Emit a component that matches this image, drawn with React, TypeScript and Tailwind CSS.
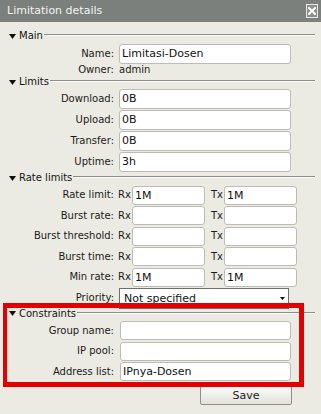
import React from "react";

const Tri = () => (
  <svg width="7" height="5" viewBox="0 0 7 5" className="shrink-0">
    <polygon points="0,0 7,0 3.5,5" fill="#111" />
  </svg>
);

const Header = ({ title }: { title: string }) => (
  <div className="flex items-center h-[12px] pl-[9px] pr-[6px]">
    <Tri />
    <span className="ml-[3px] text-[10px] leading-[12px] text-[#141414] whitespace-nowrap">{title}</span>
    <div className="flex-1 ml-[1px] -mt-[2px] h-[2px] border-t border-t-[#8c8c8a] border-b border-b-[#fbfbf8]" />
  </div>
);

const Label = ({ text }: { text: string }) => (
  <div className="w-[116px] shrink-0 text-right pr-[2px] text-[10px] leading-[12px] text-[#1a1a1a] whitespace-nowrap">
    {text}
  </div>
);

const Field = ({ value, cls }: { value: string; cls: string }) => (
  <div
    className={
      "bg-white border border-[#bcbcb4] rounded-[3px] text-[11px] leading-[13px] text-[#111] pl-[2px] flex items-center whitespace-nowrap overflow-hidden " +
      cls
    }
  >
    {value}
  </div>
);

const Row = ({ label, value, h }: { label: string; value: string; h: string }) => (
  <div className="flex items-center h-[21px]">
    <Label text={label} />
    <Field value={value} cls={"ml-[3px] w-[172px] " + h} />
  </div>
);

const RateRow = ({ label, rx, tx }: { label: string; rx: string; tx: string }) => (
  <div className="flex items-center h-[20.5px]">
    <Label text={label} />
    <span className="ml-[2px] w-[13px] text-[10px] leading-[12px] text-[#1a1a1a]">Rx</span>
    <Field value={rx} cls="ml-[1px] w-[73px] h-[19px]" />
    <span className="ml-[6px] w-[13px] text-[10px] leading-[12px] text-[#1a1a1a]">Tx</span>
    <Field value={tx} cls="w-[73px] h-[19px]" />
  </div>
);

const ConRow = ({ label, value }: { label: string; value: string }) => (
  <div className="flex items-center h-[20.5px]">
    <Label text={label} />
    <Field value={value} cls="ml-[4px] w-[171px] h-[19px]" />
  </div>
);

export default function App() {
  return (
    <div className="relative w-[321px] h-[414px] overflow-hidden bg-[#ebebe3] font-['DejaVu_Sans',sans-serif]">
      {/* Title bar */}
      <div className="flex items-center justify-between h-[22px] bg-[#7b807c] pl-[7px] pr-[3px]">
        <span className="text-[11px] leading-[14px] text-[#f4f4f2]">Limitation details</span>
        <div className="w-[12px] h-[14px] border border-[#e8e8e8] bg-[#8b908c] flex items-center justify-center">
          <svg width="8" height="8" viewBox="0 0 8 8">
            <path d="M1 1 L7 7 M7 1 L1 7" stroke="#ffffff" strokeWidth="2" strokeLinecap="square" />
          </svg>
        </div>
      </div>

      <div className="mt-[8px]">
        <Header title="Main" />
        <div className="mt-[1px]">
          <Row label="Name:" value="Limitasi-Dosen" h="h-[20px]" />
        </div>
        <div className="flex items-center h-[12px]">
          <Label text="Owner:" />
          <span className="ml-[3px] text-[10px] leading-[12px] text-[#1a1a1a]">admin</span>
        </div>

        <Header title="Limits" />
        <Row label="Download:" value="0B" h="h-[20px]" />
        <Row label="Upload:" value="0B" h="h-[20px]" />
        <Row label="Transfer:" value="0B" h="h-[20px]" />
        <Row label="Uptime:" value="3h" h="h-[20px]" />

        <Header title="Rate limits" />
        <div className="mt-[1px]">
          <RateRow label="Rate limit:" rx="1M" tx="1M" />
          <RateRow label="Burst rate:" rx="" tx="" />
          <RateRow label="Burst threshold:" rx="" tx="" />
          <RateRow label="Burst time:" rx="" tx="" />
          <RateRow label="Min rate:" rx="1M" tx="1M" />
        </div>
        <div className="flex items-center h-[21px]">
          <Label text="Priority:" />
          <div className="ml-[3px] w-[170px] h-[21px] bg-white border border-[#6e6e6e] flex items-center justify-between pl-[4px] pr-[3px]">
            <span className="text-[11px] leading-[13px] text-[#111]">Not specified</span>
            <svg width="5" height="3" viewBox="0 0 5 3">
              <polygon points="0,0 5,0 2.5,3" fill="#111" />
            </svg>
          </div>
        </div>

        <div className="-mt-[1px]">
          <Header title="Constraints" />
        </div>
        <div className="mt-[1px]">
          <ConRow label="Group name:" value="" />
          <ConRow label="IP pool:" value="" />
          <ConRow label="Address list:" value="IPnya-Dosen" />
        </div>

        <div className="pl-[200px] pt-[3.5px]">
          <div className="w-[92px] h-[19px] border border-[#8f8f8b] rounded-[2px] bg-gradient-to-b from-[#fbfbf9] to-[#e2e2dc] flex items-center justify-center text-[11px] leading-[13px] text-[#222]">
            Save
          </div>
        </div>
      </div>

      {/* red annotation box */}
      <div className="absolute left-[3px] top-[303px] w-[301px] h-[84px] border-[5px] border-l-[4px] border-[#e30000] pointer-events-none" />
    </div>
  );
}
